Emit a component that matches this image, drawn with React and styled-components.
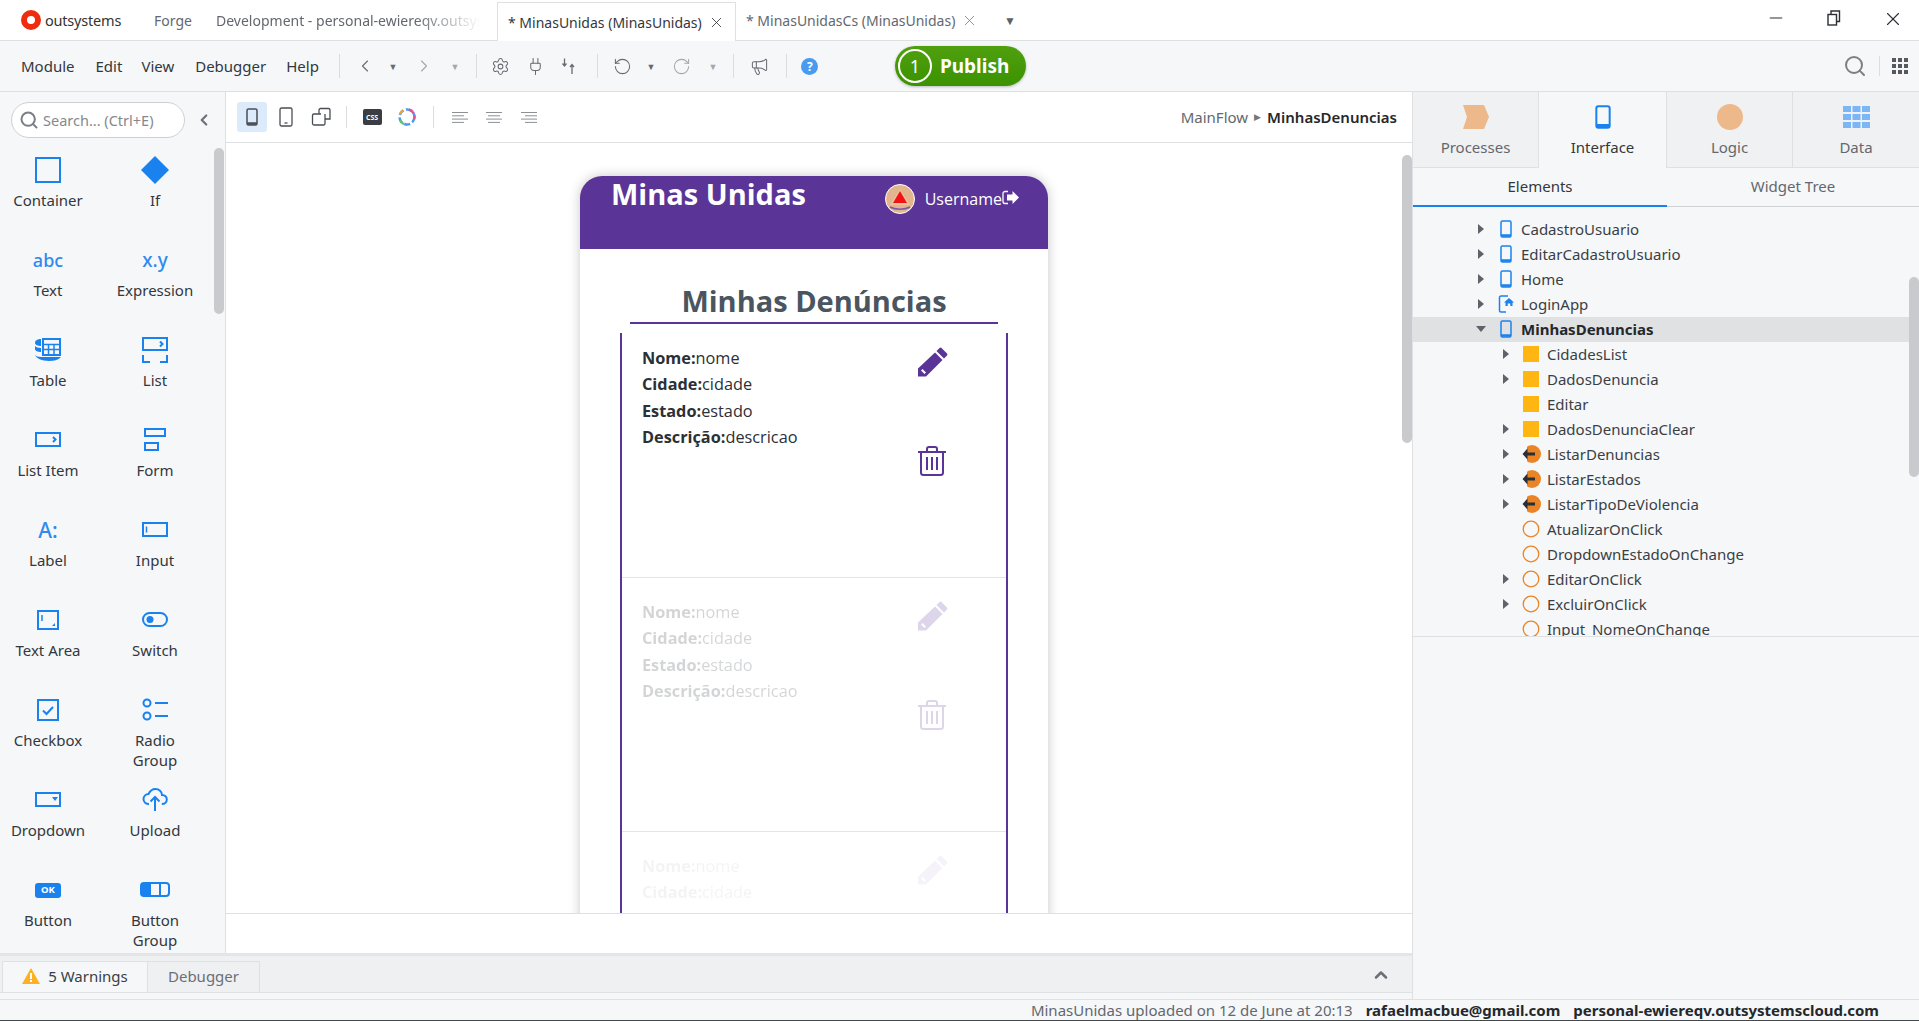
import styled, { createGlobalStyle } from "styled-components";
import {
  ChevronLeft,
  ChevronRight,
  ChevronUp,
  Megaphone,
  Minus,
  Plug,
  RotateCcw,
  RotateCw,
  Search,
  Settings,
  X,
} from "lucide-react";

const PURPLE = "#5a3597";
const BLUE = "#1a82ef";

const GlobalStyle = createGlobalStyle`
  html, body {
    margin: 0;
    padding: 0;
    height: 100%;
    overflow: hidden;
    background: #fff;
  }
  * { box-sizing: border-box; }
  body {
    font-family: "Noto Sans", "Open Sans", sans-serif;
    font-size: 15px;
    color: #3a3f45;
  }
`;

const Page = styled.div`
  width: 1919px;
  height: 1021px;
  display: grid;
  grid-template-rows: 41px 51px 907px 22px;
  overflow: hidden;
`;

/* ---- tabs ---- */

const TabBar = styled.div`
  display: flex;
  align-items: stretch;
  background: #fff;
  border-bottom: 1px solid #dfe0e2;
  padding-left: 21px;
  font-size: 14px;
`;

const Logo = styled.div`
  width: 133px;
  display: flex;
  align-items: center;
  gap: 4px;
  font-size: 14.5px;
  color: #333;
  letter-spacing: -0.2px;
`;

const Tab = styled.div`
  width: ${(p) => p.$w}px;
  flex: none;
  display: flex;
  align-items: center;
  justify-content: space-between;
  white-space: nowrap;
  overflow: hidden;
  padding-left: ${(p) => p.$pad || 0}px;
  color: ${(p) => (p.$active ? "#33383d" : "#63686e")};
  ${(p) =>
    p.$active &&
    `
    background: #fff;
    margin: 2px 0 -1px;
    padding-right: 10px;
    border: 1px solid #dfe0e2;
    border-bottom: none;
  `}
  ${(p) =>
    p.$fade &&
    `
    -webkit-mask-image: linear-gradient(to right, #000 75%, transparent 100%);
    mask-image: linear-gradient(to right, #000 75%, transparent 100%);
  `}
`;

const TabMenu = styled.div`
  margin-left: 26px;
  display: flex;
  align-items: center;
  font-size: 12px;
  color: #5c6167;
`;

const WindowButtons = styled.div`
  margin-left: auto;
  display: flex;
  align-items: flex-start;
  padding-top: 8px;
  padding-right: 15px;
  gap: 38px;
  color: #2c2f33;
`;

const RestoreIcon = () => (
  <svg width="20" height="20" viewBox="0 0 20 20" fill="none" stroke="currentColor" strokeWidth="1.4">
    <rect x="4" y="6.5" width="8.5" height="10.5" />
    <path d="M7 6.5V3h8.5v10.5h-3" />
  </svg>
);

/* ---- main toolbar ---- */

const Toolbar = styled.div`
  display: flex;
  align-items: center;
  background: #f6f7f9;
  border-bottom: 1px solid #dfe0e2;
  padding-left: 21px;
`;

const MenuItem = styled.span`
  margin-right: ${(p) => p.$gap}px;
  color: #33383d;
`;

const Separator = styled.div`
  width: 1px;
  height: ${(p) => p.$h || 24}px;
  background: #dcdde0;
  flex: none;
`;

const Slot = styled.div`
  width: ${(p) => p.$w}px;
  flex: none;
  display: flex;
  align-items: center;
  justify-content: center;
  color: ${(p) => (p.$muted ? "#a4a8ad" : "#666b71")};
  font-size: 9px;
`;

const HelpDot = styled.div`
  width: 17px;
  height: 17px;
  border-radius: 50%;
  background: #4a9bf0;
  color: #fff;
  font-size: 12px;
  font-weight: 700;
  display: flex;
  align-items: center;
  justify-content: center;
`;

const PublishButton = styled.div`
  margin-left: 62px;
  width: 131px;
  height: 40px;
  border-radius: 20px;
  background: linear-gradient(#4fa00f, #3c9200);
  box-shadow: 0 1px 3px rgba(0, 0, 0, 0.25);
  color: #fff;
  font-size: 19px;
  font-weight: 700;
  display: flex;
  align-items: center;
  gap: 8px;
  padding-left: 3px;
`;

const PublishCount = styled.div`
  width: 34px;
  height: 34px;
  border: 2px solid #fff;
  border-radius: 50%;
  font-weight: 400;
  font-size: 18px;
  display: flex;
  align-items: center;
  justify-content: center;
`;

const ToolbarEnd = styled.div`
  margin-left: auto;
  display: flex;
  align-items: center;
  gap: 12px;
  padding-right: 11px;
  color: #7b8086;
`;

const GridDots = styled.div`
  display: grid;
  grid-template-columns: repeat(3, 4px);
  grid-auto-rows: 4px;
  gap: 2px;
  span { background: #555a60; }
`;

const ArrowsIcon = () => (
  <svg width="20" height="20" viewBox="0 0 20 20" fill="none" stroke="#666b71" strokeWidth="1.3">
    <path d="M5.5 2.5v7M3.5 7.5l2 2.5 2-2.5" />
    <path d="M13 18v-9M11 11l2-2.5 2 2.5" />
  </svg>
);

/* ---- workspace ---- */

const Workspace = styled.div`
  display: grid;
  grid-template-columns: 1413px 506px;
  min-height: 0;
`;

const LeftColumn = styled.div`
  display: grid;
  grid-template-rows: 861px 46px;
  min-height: 0;
  border-right: 1px solid #dfe0e2;
`;

const EditorRow = styled.div`
  display: grid;
  grid-template-columns: 226px 1fr;
  min-height: 0;
`;

const Palette = styled.div`
  position: relative;
  background: #f6f7f9;
  border-right: 1px solid #dfe0e2;
  overflow: hidden;
`;

const SearchRow = styled.div`
  height: 56px;
  display: flex;
  align-items: center;
  padding-left: 11px;
`;

const SearchBox = styled.div`
  width: 174px;
  height: 36px;
  border: 1px solid #cfd0d3;
  border-radius: 18px;
  background: #fff;
  display: flex;
  align-items: center;
  gap: 4px;
  padding-left: 7px;
  color: #85898e;
  font-size: 14.5px;
  white-space: nowrap;
`;

const Collapse = styled.div`
  margin-left: 10px;
  display: flex;
  color: #6f7379;
`;

const PaletteGrid = styled.div`
  display: grid;
  grid-template-columns: 96px 118px;
  grid-auto-rows: 90px;
  padding-top: 7px;
`;

const PaletteItem = styled.div`
  display: flex;
  flex-direction: column;
  align-items: center;
  text-align: center;
  color: #33383d;
  line-height: 20px;
`;

const PaletteLabel = styled.div`
  max-width: 80px;
`;

const PaletteIcon = styled.div`
  height: 30px;
  margin-bottom: 5px;
  display: flex;
  align-items: center;
  justify-content: center;
  color: ${BLUE};
`;

const GlyphIcon = styled.span`
  font-size: ${(p) => p.$size || 18}px;
  font-weight: 500;
  color: #2f8af0;
  line-height: 30px;
`;

const Scrollbar = styled.div`
  position: absolute;
  top: ${(p) => p.$top}px;
  right: ${(p) => p.$right || 0}px;
  width: 10px;
  height: ${(p) => p.$h}px;
  background: #c9cacd;
  border-radius: 5px;
`;

const Svg = ({ w = 26, h = 26, children }) => (
  <svg width={w} height={h} viewBox={`0 0 ${w} ${h}`} fill="none" stroke={BLUE} strokeWidth="2">
    {children}
  </svg>
);

const ButtonBadge = styled.div`
  width: 26px;
  height: 15px;
  border-radius: 3px;
  background: ${BLUE};
  color: #fff;
  font-size: 9.5px;
  font-weight: 700;
  display: flex;
  align-items: center;
  justify-content: center;
`;

const paletteItems = [
  ["Container", <Svg><rect x="1" y="1" width="24" height="24" /></Svg>],
  ["If", <Svg w={30} h={28}><path d="M15 0l14 14-14 14L1 14z" fill={BLUE} stroke="none" /></Svg>],
  ["Text", <GlyphIcon>abc</GlyphIcon>],
  ["Expression", <GlyphIcon $size={19}>x.y</GlyphIcon>],
  ["Table", (
    <Svg w={28} h={26}>
      <path d="M1 6c0 2 3 3 6 3V2C4 2 1 3 1 6zM1 12c0 2 3 3 6 3v-4c-3 0-5-1-6-2zM1 18c1 3 7 6 14 6 5 0 9-1 12-4H7c-3 0-5-1-6-2z" fill={BLUE} stroke="none" />
      <rect x="9" y="2" width="17" height="16" fill="none" />
      <path d="M9 7.5h17M9 12.5h17M14.500 7.500V18M20 7.500V18" strokeWidth="1.5" />
    </Svg>
  )],
  ["List", (
    <Svg>
      <rect x="1" y="1" width="24" height="12" />
      <path d="M18 4.500l2.500 2.500L18 9.500" />
      <path d="M1 18v7h7M18 25h7v-7" />
    </Svg>
  )],
  ["List Item", (
    <Svg h={16}>
      <rect x="1" y="1" width="24" height="13" />
      <path d="M18 5l2.500 2.500L18 10" />
    </Svg>
  )],
  ["Form", (
    <Svg w={24} h={24}>
      <rect x="2" y="1" width="20" height="7" />
      <rect x="2" y="15" width="13" height="7" />
    </Svg>
  )],
  ["Label", <GlyphIcon $size={21}>A:</GlyphIcon>],
  ["Input", (
    <Svg h={16}>
      <rect x="1" y="1" width="24" height="13" />
      <path d="M4.500 4.500v6" strokeWidth="1.500" />
    </Svg>
  )],
  ["Text Area", (
    <Svg w={24} h={22}>
      <rect x="2" y="2" width="20" height="18" />
      <path d="M6 6v6" strokeWidth="1.500" />
      <path d="M19 14v3h-3z" fill={BLUE} stroke="none" />
    </Svg>
  )],
  ["Switch", (
    <Svg h={16}>
      <rect x="1" y="1" width="24" height="13" rx="6.500" />
      <circle cx="8" cy="7.500" r="3.500" fill={BLUE} stroke="none" />
    </Svg>
  )],
  ["Checkbox", (
    <Svg w={24} h={24}>
      <rect x="2" y="2" width="20" height="20" />
      <path d="M7 12.500l3.500 3.500L17 9" />
    </Svg>
  )],
  ["Radio Group", (
    <Svg h={24}>
      <circle cx="5" cy="5" r="3.500" />
      <circle cx="5" cy="18" r="3.500" />
      <path d="M13 5h13M13 18h13" />
    </Svg>
  )],
  ["Dropdown", (
    <Svg h={16}>
      <rect x="1" y="1" width="24" height="13" />
      <path d="M17 5h6l-3 4z" fill={BLUE} stroke="none" />
    </Svg>
  )],
  ["Upload", (
    <Svg h={26}>
      <path d="M7 17c-3 0-5.500-2-5.500-5 0-3 2.500-5 5-5C8 4 10 2 13.500 2 17 2 20 4.500 20 8c3 0 4.800 2 4.800 4.500 0 2.500-2 4.500-5 4.500" />
      <path d="M13 24V10M8.500 14.500L13 10l4.500 4.500" />
    </Svg>
  )],
  ["Button", <ButtonBadge>OK</ButtonBadge>],
  ["Button Group", (
    <Svg w={30} h={16}>
      <rect x="1" y="1" width="28" height="13" rx="3" />
      <path d="M1 4a3 3 0 013-3h7v13H4a3 3 0 01-3-3z" fill={BLUE} stroke="none" />
      <path d="M20 1v13" />
    </Svg>
  )],
];

/* ---- canvas ---- */

const Editor = styled.div`
  display: grid;
  grid-template-rows: 51px 770px 40px;
  min-height: 0;
`;

const CanvasBar = styled.div`
  display: flex;
  align-items: center;
  background: #fff;
  border-bottom: 1px solid #dfe0e2;
  padding-left: 11px;
`;

const DeviceButton = styled.div`
  width: 30px;
  height: 30px;
  flex: none;
  margin-right: ${(p) => p.$gap || 0}px;
  border-radius: 3px;
  background: ${(p) => (p.$active ? "#dcebfb" : "transparent")};
  display: flex;
  align-items: center;
  justify-content: center;
`;

const CssBadge = styled.div`
  width: 19px;
  height: 16px;
  background: #3a3d41;
  border-radius: 2px;
  color: #fff;
  font-size: 7px;
  font-weight: 700;
  display: flex;
  align-items: center;
  justify-content: center;
`;

const Breadcrumb = styled.div`
  margin-left: auto;
  padding-right: 15px;
  padding-bottom: 1px;
  display: flex;
  align-items: center;
  gap: 6px;
  color: #63686e;
`;

const BreadcrumbArrow = styled.span`
  font-size: 9px;
  color: #777;
`;

const BreadcrumbCurrent = styled.span`
  color: #24282c;
  font-weight: 600;
`;

const Viewport = styled.div`
  position: relative;
  background: #fff;
  overflow: hidden;
  padding: 33px 0 0 354px;
`;

const Phone = styled.div`
  width: 468px;
  background: #fff;
  border-radius: 22px 22px 0 0;
  box-shadow: 0 0 12px rgba(0, 0, 0, 0.22);
`;

const PhoneHeader = styled.div`
  height: 73px;
  background: ${PURPLE};
  border-radius: 22px 22px 0 0;
  color: #fff;
  display: flex;
  justify-content: space-between;
  padding: 0 29px 0 31px;
`;

const AppTitle = styled.div`
  font-family: "Open Sans", "Noto Sans", sans-serif;
  font-size: 29px;
  font-weight: 700;
  line-height: 36px;
`;

const UserInfo = styled.div`
  height: 30px;
  margin-top: 8px;
  display: flex;
  align-items: center;
  font-family: "Open Sans", sans-serif;
  font-size: 16px;
`;

const Avatar = styled.div`
  width: 30px;
  height: 30px;
  margin-right: 10px;
  border-radius: 50%;
  border: 1.5px solid #fff;
  background: #e3b58f;
  display: flex;
  align-items: center;
  justify-content: center;
`;

const PageTitle = styled.h1`
  margin: 0;
  padding-top: 33px;
  height: 73px;
  text-align: center;
  font-family: "Open Sans", "Noto Sans", sans-serif;
  font-size: 29px;
  font-weight: 700;
  line-height: 38px;
  color: #4a5560;
`;

const Card = styled.div`
  position: relative;
  margin: 0 40px;
  border: 2px solid ${PURPLE};
  border-bottom: none;

  /* the rounded corners of the list show up as gaps in the border */
  &::before,
  &::after {
    content: "";
    position: absolute;
    top: -2px;
    width: 10px;
    height: 11px;
    background: #fff;
  }
  &::before { left: -2px; }
  &::after { right: -2px; }
`;

const Item = styled.div`
  height: 254px;
  border-bottom: 1px solid #e3e4e6;
`;

const ItemBody = styled.div`
  display: flex;
  justify-content: space-between;
  padding: 21px 58px 0 20px;
  opacity: ${(p) => p.$fade};
  font-family: "Open Sans", sans-serif;
  font-size: 16.3px;
  line-height: 26.3px;
  color: #2b3036;
`;

const Field = styled.div`
  b { font-weight: 700; }
`;

const ItemActions = styled.div`
  display: flex;
  flex-direction: column;
  gap: 69px;
  margin-top: 2px;
`;

const PencilIcon = () => (
  <svg width="30" height="30" viewBox="0 0 30 30" style={{ display: "block" }}>
    <path
      d="M23.500 1l5.500 5.500a1.500 1.500 0 010 2L26 11.500 18.500 4 21.500 1a1.500 1.500 0 012 0zM17 5.500L24.500 13 9 28.500l-1 1H0v-8zM3 23.500l3.500 3.500 1.500-1.500L4.500 22z"
      fill={PURPLE}
      fillRule="evenodd"
    />
  </svg>
);

const TrashIcon = () => (
  <svg width="28" height="30" viewBox="0 0 28 30" fill="none" stroke={PURPLE} strokeWidth="2" style={{ display: "block" }}>
    <path d="M0 6h28M9 6V3a2 2 0 012-2h6a2 2 0 012 2v3" />
    <path d="M3 6v20.500a2.500 2.500 0 002.500 2.500h17a2.500 2.500 0 002.500-2.500V6" />
    <path d="M9 11v13M14 11v13M19 11v13" />
  </svg>
);

const SignOutIcon = () => (
  <svg width="17" height="15" viewBox="0 0 17 15" fill="#fff" style={{ marginBottom: 3 }}>
    <path d="M6 1.500H3A2 2 0 001 3.500v8a2 2 0 002 2h3" fill="none" stroke="#fff" strokeWidth="1.300" />
    <path d="M10.500 1L17 7.500 10.500 14v-3.500H5v-6h5.500z" />
  </svg>
);

const AvatarLogo = () => (
  <svg width="26" height="26" viewBox="0 0 26 26">
    <path d="M13 3l10 16H3z" fill="#f5ca9f" opacity="0.6" />
    <path d="M13 5l7 12H6z" fill="#f21414" />
    <path d="M3 21c5 3 15 3 20 0" fill="none" stroke="#7a5aa8" strokeWidth="1.500" />
  </svg>
);

const CanvasFooter = styled.div`
  background: #fff;
  border-top: 1px solid #dfe0e2;
`;

/* ---- bottom panel ---- */

const BottomPanel = styled.div`
  display: flex;
  flex-direction: column;
  background: #eff0f2;
  border-top: 3px solid #e4e5e7;
`;

const BottomTabs = styled.div`
  height: 37px;
  display: flex;
  align-items: flex-end;
  padding-left: 2px;
  border-bottom: 1px solid #dfe0e2;
`;

const BottomTab = styled.div`
  height: 31px;
  width: ${(p) => p.$w}px;
  padding-bottom: 2px;
  display: flex;
  align-items: center;
  justify-content: center;
  gap: 8px;
  border: 1px solid #dfe0e2;
  border-left-width: ${(p) => (p.$active ? 1 : 0)}px;
  border-bottom: none;
  background: ${(p) => (p.$active ? "#f6f7f9" : "#eff0f2")};
  color: ${(p) => (p.$active ? "#3a3f45" : "#6a6f75")};
`;

const PanelToggle = styled.div`
  margin: 0 21px 7px auto;
  display: flex;
  color: #6b7076;
`;

const BottomStrip = styled.div`
  flex: 1;
  background: #f6f7f9;
`;

/* ---- right panel ---- */

const RightPanel = styled.div`
  position: relative;
  display: flex;
  flex-direction: column;
  background: #f6f7f9;
  min-height: 0;
  overflow: hidden;
`;

const ModeTabs = styled.div`
  height: 76px;
  display: grid;
  grid-template-columns: 126px 128px 126px 1fr;
`;

const ModeTab = styled.div`
  display: flex;
  flex-direction: column;
  align-items: center;
  padding-top: 10px;
  background: ${(p) => (p.$active ? "#f6f7f9" : "#f0f1f3")};
  border-bottom: ${(p) => (p.$active ? "none" : "1px solid #dfe0e2")};
  border-right: 1px solid #dfe0e2;
  color: ${(p) => (p.$active ? "#33383d" : "#63686e")};
  &:last-child { border-right: none; }
`;

const ModeIcon = styled.div`
  height: 30px;
  margin-bottom: 5px;
  display: flex;
  align-items: center;
`;

const SubTabs = styled.div`
  height: 39px;
  display: grid;
  grid-template-columns: 254px 1fr;
`;

const SubTab = styled.div`
  display: flex;
  align-items: center;
  justify-content: center;
  padding-bottom: 2px;
  color: ${(p) => (p.$active ? "#33383d" : "#63686e")};
  border-bottom: ${(p) => (p.$active ? `2px solid ${BLUE}` : "1px solid #cfd0d3")};
`;

const Tree = styled.div`
  height: 429px;
  padding-top: 10px;
  overflow: hidden;
`;

const TreeDivider = styled.div`
  height: 1px;
  background: #dfe0e2;
`;

const TreeRow = styled.div`
  height: 25px;
  display: flex;
  align-items: center;
  padding-left: ${(p) => 61 + p.$level * 25}px;
  padding-bottom: 2px;
  background: ${(p) => (p.$selected ? "#e0e1e3" : "transparent")};
  color: ${(p) => (p.$selected ? "#24282c" : "#3a3f45")};
  font-weight: ${(p) => (p.$selected ? 700 : 400)};
`;

const TreeArrow = styled.div`
  width: 14px;
  flex: none;
  display: flex;
  justify-content: center;
`;

const TreeIcon = styled.div`
  width: 24px;
  margin: 0 ${(p) => (p.$level ? 4 : 3)}px 0 6px;
  flex: none;
  display: flex;
  justify-content: center;
`;

const Caret = ({ open }) => (
  <svg width="10" height="10" viewBox="0 0 10 10" fill="#5f6369">
    <path d={open ? "M0 2h10L5 8z" : "M2 0l6 5-6 5z"} />
  </svg>
);

const ScreenIcon = ({ color = BLUE, w = 10, h = 18 }) => (
  <svg width={w + 2} height={h} viewBox="0 0 12 18" fill="none" stroke={color} strokeWidth="1.500">
    <rect x="1" y="1" width="10" height="16" rx="1.500" />
    <path d="M1 15.500h10" strokeWidth="2.500" />
  </svg>
);

const HomeScreenIcon = () => (
  <svg width="16" height="18" viewBox="0 0 16 18" fill="none" stroke={BLUE} strokeWidth="1.500">
    <path d="M10 1H3a1.500 1.500 0 00-1.500 1.500v13A1.500 1.500 0 003 17h5" />
    <path d="M11 3l5 4.500h-1.500V11h-2.200V8.500h-2.600V11H7.500V7.500H6z" fill={BLUE} stroke="none" />
  </svg>
);

const VarIcon = () => (
  <svg width="16" height="16" viewBox="0 0 16 16">
    <rect width="16" height="16" fill="#ffb612" />
  </svg>
);

const ActionIcon = () => (
  <svg width="18" height="18" viewBox="0 0 18 18" fill="none" stroke="#e98526" strokeWidth="1.300">
    <circle cx="9" cy="9" r="7.800" />
  </svg>
);

const ServerActionIcon = () => (
  <svg width="19" height="18" viewBox="0 0 19 18">
    <circle cx="10" cy="9" r="9" fill="#e98526" />
    <path d="M0 0h5v4L3 9l2 5v4H0z" fill="#f6f7f9" />
    <path d="M5.500 3.500L0.500 9l5 5.500v-4h7.500v-3H5.500z" fill="#2b2e33" />
  </svg>
);

const treeRows = [
  { name: "CadastroUsuario", level: 0, arrow: true, icon: <ScreenIcon /> },
  { name: "EditarCadastroUsuario", level: 0, arrow: true, icon: <ScreenIcon /> },
  { name: "Home", level: 0, arrow: true, icon: <ScreenIcon /> },
  { name: "LoginApp", level: 0, arrow: true, icon: <HomeScreenIcon /> },
  { name: "MinhasDenuncias", level: 0, arrow: true, open: true, selected: true, icon: <ScreenIcon /> },
  { name: "CidadesList", level: 1, arrow: true, icon: <VarIcon /> },
  { name: "DadosDenuncia", level: 1, arrow: true, icon: <VarIcon /> },
  { name: "Editar", level: 1, icon: <VarIcon /> },
  { name: "DadosDenunciaClear", level: 1, arrow: true, icon: <VarIcon /> },
  { name: "ListarDenuncias", level: 1, arrow: true, icon: <ServerActionIcon /> },
  { name: "ListarEstados", level: 1, arrow: true, icon: <ServerActionIcon /> },
  { name: "ListarTipoDeViolencia", level: 1, arrow: true, icon: <ServerActionIcon /> },
  { name: "AtualizarOnClick", level: 1, icon: <ActionIcon /> },
  { name: "DropdownEstadoOnChange", level: 1, icon: <ActionIcon /> },
  { name: "EditarOnClick", level: 1, arrow: true, icon: <ActionIcon /> },
  { name: "ExcluirOnClick", level: 1, arrow: true, icon: <ActionIcon /> },
  { name: "Input_NomeOnChange", level: 1, icon: <ActionIcon /> },
];

/* ---- status bar ---- */

const StatusBar = styled.div`
  display: flex;
  justify-content: flex-end;
  align-items: center;
  gap: 13px;
  padding-right: 40px;
  background: #f6f7f9;
  border-top: 1px solid #dfe0e2;
  border-bottom: 1px solid #44474b;
  color: #63686e;
`;

const StatusStrong = styled.span`
  color: #24282c;
  font-weight: 700;
`;

const AlignIcon = ({ mode }) => {
  const rows = [16, 12, 16, 12];
  return (
    <svg width="16" height="13" viewBox="0 0 16 13" stroke="#8d9196" strokeWidth="1">
      {rows.map((w, i) => {
        const x = mode === "left" ? 0 : mode === "right" ? 16 - w : (16 - w) / 2;
        return <path key={i} d={`M${x} ${1.5 + i * 3.3}h${w}`} />;
      })}
    </svg>
  );
};

const items = [1, 0.2, 0.05];

const App = () => {
  return (
    <Page>
      <GlobalStyle />
      <TabBar>
        <Logo>
          <svg width="20" height="20" viewBox="0 0 20 20">
            <circle cx="10" cy="10" r="7" fill="none" stroke="#f02c0e" strokeWidth="6" />
          </svg>
          outsystems
        </Logo>
        <Tab $w={62}>Forge</Tab>
        <Tab $w={265} $fade>Development - personal-ewiereqv.outsystemscloud.com</Tab>
        <Tab $w={16} />
        <Tab $w={239} $active $pad={10}>
          * MinasUnidas (MinasUnidas)
          <X size={17} strokeWidth={1.2} />
        </Tab>
        <Tab $w={242} $pad={10}>
          * MinasUnidasCs (MinasUnidas)
          <X size={17} strokeWidth={1.2} color="#7c8086" />
        </Tab>
        <TabMenu>▼</TabMenu>
        <WindowButtons>
          <Minus size={20} strokeWidth={1.2} />
          <RestoreIcon />
          <X size={22} strokeWidth={1.2} />
        </WindowButtons>
      </TabBar>

      <Toolbar>
        <MenuItem $gap={21}>Module</MenuItem>
        <MenuItem $gap={19}>Edit</MenuItem>
        <MenuItem $gap={21}>View</MenuItem>
        <MenuItem $gap={20}>Debugger</MenuItem>
        <MenuItem $gap={20}>Help</MenuItem>
        <Separator />
        <Slot $w={50}><ChevronLeft size={20} strokeWidth={1.3} /></Slot>
        <Slot $w={6}>▼</Slot>
        <Slot $w={56} $muted><ChevronRight size={20} strokeWidth={1.3} /></Slot>
        <Slot $w={6} $muted>▼</Slot>
        <Slot $w={18} />
        <Separator />
        <Slot $w={47}><Settings size={19} strokeWidth={1.3} /></Slot>
        <Slot $w={23}><Plug size={19} strokeWidth={1.3} /></Slot>
        <Slot $w={44}><ArrowsIcon /></Slot>
        <Slot $w={6} />
        <Separator />
        <Slot $w={50}><RotateCcw size={19} strokeWidth={1.3} /></Slot>
        <Slot $w={6}>▼</Slot>
        <Slot $w={56} $muted><RotateCw size={19} strokeWidth={1.3} /></Slot>
        <Slot $w={6} $muted>▼</Slot>
        <Slot $w={17} />
        <Separator />
        <Slot $w={52}><Megaphone size={19} strokeWidth={1.3} /></Slot>
        <Separator />
        <Slot $w={46}><HelpDot>?</HelpDot></Slot>
        <PublishButton>
          <PublishCount>1</PublishCount>
          Publish
        </PublishButton>
        <ToolbarEnd>
          <Search size={24} strokeWidth={2} />
          <Separator $h={20} />
          <GridDots>
            {Array.from({ length: 9 }, (_, i) => <span key={i} />)}
          </GridDots>
        </ToolbarEnd>
      </Toolbar>

      <Workspace>
        <LeftColumn>
          <EditorRow>
            <Palette>
              <SearchRow>
                <SearchBox>
                  <Search size={20} strokeWidth={2.4} color="#7b7f85" />
                  Search... (Ctrl+E)
                </SearchBox>
                <Collapse><ChevronLeft size={18} strokeWidth={3} /></Collapse>
              </SearchRow>
              <PaletteGrid>
                {paletteItems.map(([label, icon]) => (
                  <PaletteItem key={label}>
                    <PaletteIcon>{icon}</PaletteIcon>
                    <PaletteLabel>{label}</PaletteLabel>
                  </PaletteItem>
                ))}
              </PaletteGrid>
              <Scrollbar $top={56} $h={166} $right={1} />
            </Palette>
            <Editor>
              <CanvasBar>
                <DeviceButton $active $gap={4}><ScreenIcon color="#4a4e54" h={20} /></DeviceButton>
                <DeviceButton $gap={5}>
                  <svg width="14" height="20" viewBox="0 0 14 20" fill="none" stroke="#4a4e54" strokeWidth="1.300">
                    <rect x="1" y="1" width="12" height="18" rx="1.500" />
                    <path d="M5.500 16h3" />
                  </svg>
                </DeviceButton>
                <DeviceButton $gap={10}>
                  <svg width="20" height="20" viewBox="0 0 20 20" fill="none" stroke="#4a4e54" strokeWidth="1.300">
                    <path d="M10 7H3a1.500 1.500 0 00-1.500 1.500v8A1.500 1.500 0 003 18h9.500a1.500 1.500 0 001.500-1.500V7" />
                    <path d="M8 7V3a1.500 1.500 0 011.500-1.500h8A1.500 1.500 0 0119 3v9h-5" />
                  </svg>
                </DeviceButton>
                <Separator $h={22} />
                <Slot $w={50}><CssBadge>CSS</CssBadge></Slot>
                <Slot $w={20}>
                  <svg width="20" height="20" viewBox="0 0 20 20" fill="none" strokeWidth="2.500" strokeDasharray="6 2.500">
                    <circle cx="10" cy="10" r="7.500" stroke="#4a9bf0" />
                    <path d="M12 2.500A7.500 7.500 0 0117 12" stroke="#e0569b" />
                    <path d="M3 13a7.500 7.500 0 005 4.500" stroke="#65c27a" />
                    <path d="M3 7a7.500 7.500 0 013-3.500" stroke="#f0a32f" />
                  </svg>
                </Slot>
                <Slot $w={16} />
                <Separator $h={22} />
                <Slot $w={51}><AlignIcon mode="left" /></Slot>
                <Slot $w={17}><AlignIcon mode="center" /></Slot>
                <Slot $w={53}><AlignIcon mode="right" /></Slot>
                <Breadcrumb>
                  MainFlow
                  <BreadcrumbArrow>▶</BreadcrumbArrow>
                  <BreadcrumbCurrent>MinhasDenuncias</BreadcrumbCurrent>
                </Breadcrumb>
              </CanvasBar>
              <Viewport>
                <Phone>
                  <PhoneHeader>
                    <AppTitle>Minas Unidas</AppTitle>
                    <UserInfo>
                      <Avatar><AvatarLogo /></Avatar>
                      Username
                      <SignOutIcon />
                    </UserInfo>
                  </PhoneHeader>
                  <PageTitle>Minhas Denúncias</PageTitle>
                  <Card>
                    {items.map((fade) => (
                      <Item key={fade}>
                        <ItemBody $fade={fade}>
                          <div>
                            <Field><b>Nome:</b>nome</Field>
                            <Field><b>Cidade:</b>cidade</Field>
                            <Field><b>Estado:</b>estado</Field>
                            <Field><b>Descrição:</b>descricao</Field>
                          </div>
                          <ItemActions>
                            <PencilIcon />
                            <TrashIcon />
                          </ItemActions>
                        </ItemBody>
                      </Item>
                    ))}
                  </Card>
                </Phone>
                <Scrollbar $top={12} $h={288} $right={0} />
              </Viewport>
              <CanvasFooter />
            </Editor>
          </EditorRow>
          <BottomPanel>
            <BottomTabs>
              <BottomTab $w={146} $active>
                <svg width="18" height="16" viewBox="0 0 18 16">
                  <path d="M9 0l9 16H0z" fill="#fdb022" />
                  <path d="M8 5h2v6H8zM8 12h2v2H8z" fill="#fff" />
                </svg>
                5 Warnings
              </BottomTab>
              <BottomTab $w={112}>Debugger</BottomTab>
              <PanelToggle><ChevronUp size={20} strokeWidth={3} /></PanelToggle>
            </BottomTabs>
            <BottomStrip />
          </BottomPanel>
        </LeftColumn>

        <RightPanel>
          <ModeTabs>
            <ModeTab>
              <ModeIcon>
                <svg width="26" height="24" viewBox="0 0 26 24">
                  <path d="M0 0h21l5 12-5 12H0l4-12z" fill="#edb98a" />
                </svg>
              </ModeIcon>
              Processes
            </ModeTab>
            <ModeTab $active>
              <ModeIcon><ScreenIcon w={14} h={26} /></ModeIcon>
              Interface
            </ModeTab>
            <ModeTab>
              <ModeIcon>
                <svg width="26" height="26" viewBox="0 0 26 26">
                  <circle cx="13" cy="13" r="13" fill="#edb98a" />
                </svg>
              </ModeIcon>
              Logic
            </ModeTab>
            <ModeTab>
              <ModeIcon>
                <svg width="27" height="22" viewBox="0 0 27 22" fill="#7db6f5">
                  {[0, 8, 16].map((y) =>
                    [0, 9.500, 19].map((x) => <rect key={`${x}-${y}`} x={x} y={y} width="8" height="6" />)
                  )}
                </svg>
              </ModeIcon>
              Data
            </ModeTab>
          </ModeTabs>
          <SubTabs>
            <SubTab $active>Elements</SubTab>
            <SubTab>Widget Tree</SubTab>
          </SubTabs>
          <Tree>
            {treeRows.map((row) => (
              <TreeRow key={row.name} $level={row.level} $selected={row.selected}>
                <TreeArrow>{row.arrow && <Caret open={row.open} />}</TreeArrow>
                <TreeIcon $level={row.level}>{row.icon}</TreeIcon>
                {row.name}
              </TreeRow>
            ))}
          </Tree>
          <TreeDivider />
          <Scrollbar $top={185} $h={200} $right={0} />
        </RightPanel>
      </Workspace>

      <StatusBar>
        <span>MinasUnidas uploaded on 12 de June at 20:13</span>
        <StatusStrong>rafaelmacbue@gmail.com</StatusStrong>
        <StatusStrong>personal-ewiereqv.outsystemscloud.com</StatusStrong>
      </StatusBar>
    </Page>
  );
};

export default App;
